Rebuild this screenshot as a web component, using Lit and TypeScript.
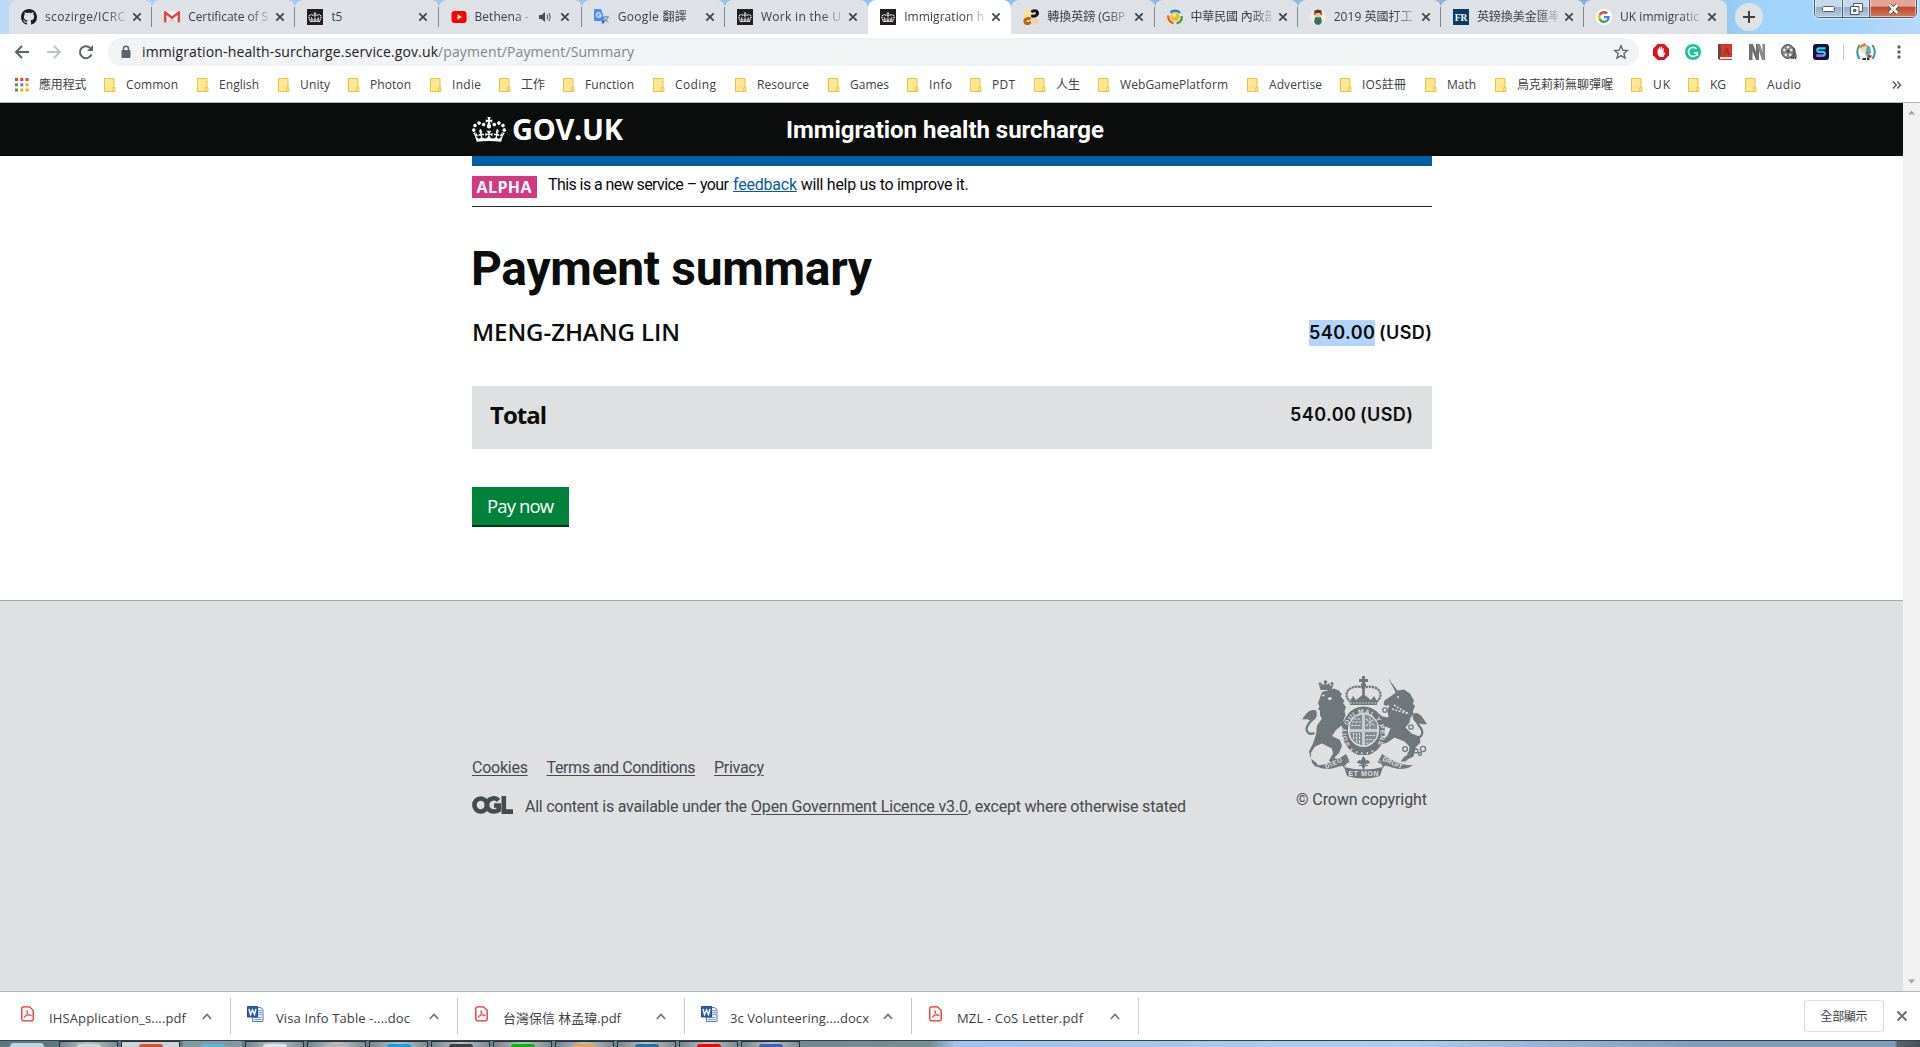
import { LitElement, html, css, svg, nothing } from "lit";
import { customElement, property } from "lit/decorators.js";

/** Inline label whose tracking is adjusted so the text spans a given width. */
@customElement("fit-text")
class FitText extends LitElement {
  @property({ type: Number }) w = 0;
  static styles = css`
    :host { display: inline-block; white-space: pre; flex: none; }
  `;
  render() {
    return html`<slot></slot>`;
  }
  updated() {
    this.style.letterSpacing = "0px";
    const range = document.createRange();
    range.selectNodeContents(this);
    const natural = range.getBoundingClientRect().width;
    const n = Array.from((this.textContent || "").trim()).length;
    if (n > 1 && natural > 0) this.style.letterSpacing = `${(this.w - natural) / (n - 1)}px`;
    this.style.width = `${this.w}px`;
  }
}

const CROWN =
  "M25 30.2c3.5 1.5 7.7-.2 9.1-3.7 1.5-3.6-.2-7.8-3.9-9.2-3.6-1.4-7.6.3-9.1 3.9-1.4 3.5.3 7.5 3.9 9zM9 39.5c3.6 1.5 7.8-.2 9.2-3.7 1.5-3.6-.2-7.8-3.9-9.1-3.6-1.5-7.6.2-9.1 3.8-1.4 3.5.3 7.5 3.8 9zM4.4 57.2c3.5 1.5 7.7-.2 9.1-3.8 1.5-3.6-.2-7.7-3.9-9.1-3.5-1.5-7.6.3-9.1 3.8-1.4 3.5.3 7.6 3.9 9.1zm38.3-21.4c3.5 1.5 7.7-.2 9.1-3.8 1.5-3.6-.2-7.7-3.9-9.1-3.6-1.5-7.6.3-9.1 3.8-1.3 3.6.4 7.7 3.9 9.1zm64.4-5.6c-3.6 1.5-7.8-.2-9.1-3.7-1.5-3.6.2-7.8 3.8-9.2 3.6-1.4 7.7.3 9.2 3.9 1.3 3.5-.4 7.5-3.9 9zm15.9 9.3c-3.6 1.5-7.7-.2-9.1-3.7-1.5-3.6.2-7.8 3.7-9.1 3.6-1.5 7.7.2 9.2 3.8 1.5 3.5-.3 7.5-3.8 9zm4.7 17.7c-3.6 1.5-7.8-.2-9.2-3.8-1.5-3.6.2-7.7 3.9-9.1 3.6-1.5 7.7.3 9.2 3.8 1.3 3.5-.4 7.6-3.9 9.1zM89.3 35.8c-3.6 1.5-7.8-.2-9.2-3.8-1.4-3.6.2-7.7 3.9-9.1 3.6-1.5 7.7.3 9.2 3.8 1.4 3.6-.3 7.7-3.9 9.1zM69.7 17.7l8.9 4.7V9.3l-8.9 2.8c-.2-.3-.5-.6-.9-.9L72.4 0H59.6l3.5 11.2c-.3.3-.6.5-.9.9l-8.8-2.8v13.1l8.8-4.7c.3.3.6.7.9.9l-5 15.4v.1c-.2.8-.4 1.6-.4 2.4 0 4.1 3.1 7.5 7 8.1h.2c.3 0 .7.1 1 .1.4 0 .7 0 1-.1h.2c4-.6 7.1-4.1 7.1-8.1 0-.8-.1-1.7-.4-2.4V34l-5.1-15.4c.4-.2.7-.6 1-.9zM66 92.8c16.9 0 32.8 1.1 47.1 3.2 4-16.9 8.9-26.7 14-33.5l-9.6-3.4c1 4.9 1.1 7.2 0 10.2-1.5-1.4-3-4.3-4.2-8.7L108.6 76c2.8-2 5-3.2 7.5-3.3-4.4 9.4-10 11.9-13.6 11.2-4.3-.8-6.3-4.6-5.6-7.9 1-4.7 5.7-5.9 8-.5 4.3-8.7-3-11.4-7.6-8.8 7.1-7.2 7.9-13.5 2.1-21.1-8 6.1-8.1 12.3-4.5 20.8-4.7-5.4-12.1-2.5-9.5 6.2 3.4-5.2 7.9-2 7.2 3.1-.6 4.3-6.4 7.8-13.5 7.2-10.3-.9-10.9-8-11.2-13.8 2.5-.5 7.1 1.8 11 7.3L80.2 60c-4.1 4.4-8 5.3-12.3 5.4 1.4-4.4 8-11.6 8-11.6H55.5s6.4 7.2 7.9 11.6c-4.2-.1-8-1-12.3-5.4l1.4 16.4c3.9-5.5 8.5-7.7 10.9-7.3-.3 5.8-.9 12.8-11.1 13.8-7.2.6-12.9-2.9-13.5-7.2-.7-5 3.8-8.3 7.1-3.1 2.7-8.7-4.6-11.6-9.4-6.2 3.7-8.5 3.6-14.7-4.6-20.8-5.8 7.6-5 13.9 2.2 21.1-4.7-2.6-11.9.1-7.7 8.8 2.3-5.5 7.1-4.2 8.1.5.7 3.3-1.3 7.1-5.7 7.9-3.5.7-9-1.8-13.5-11.2 2.5.1 4.7 1.3 7.5 3.3l-4.7-15.4c-1.2 4.4-2.7 7.2-4.3 8.7-1.1-3-.9-5.3 0-10.2l-9.5 3.4c5 6.9 9.9 16.7 14 33.5 14.8-2.1 30.8-3.2 47.7-3.2z";

const box = (content: unknown, size = 16, view = "0 0 16 16") =>
  html`<svg class="ico" width=${size} height=${size} viewBox=${view}>${content}</svg>`;

const govIcon = box(svg`<rect width="16" height="16" fill="#231f20"/>
  <g transform="translate(1.2 3.2) scale(.103)"><path fill="#fff" d=${CROWN} /></g>`);

const ICONS: Record<string, unknown> = {
  github: box(svg`<path fill="#1b1f23" fill-rule="evenodd" d="M8 0C3.58 0 0 3.58 0 8c0 3.54 2.29 6.53 5.47 7.59.4.07.55-.17.55-.38 0-.19-.01-.82-.01-1.49-2.01.37-2.53-.49-2.69-.94-.09-.23-.48-.94-.82-1.13-.28-.15-.68-.52-.01-.53.63-.01 1.08.58 1.23.82.72 1.21 1.87.87 2.33.66.07-.52.28-.87.51-1.07-1.78-.2-3.64-.89-3.64-3.95 0-.87.31-1.59.82-2.15-.08-.2-.36-1.02.08-2.12 0 0 .67-.21 2.2.82.64-.18 1.32-.27 2-.27s1.36.09 2 .27c1.53-1.04 2.2-.82 2.2-.82.44 1.1.16 1.92.08 2.12.51.56.82 1.27.82 2.15 0 3.07-1.87 3.75-3.65 3.95.29.25.54.73.54 1.48 0 1.07-.01 1.93-.01 2.2 0 .21.15.46.55.38A8.01 8.01 0 0 0 16 8c0-4.42-3.58-8-8-8z"/>`),
  gmail: box(svg`<path fill="#f5f5f5" d="M1 2.5h14v11H1z"/><path fill="#d6d6d6" d="M3 13.5 8 8.6l5 4.9z"/>
    <path fill="#d54b3d" d="M0 3.2C0 2.5.6 2 1.3 2L8 7.3 14.700 2c.7 0 1.300.5 1.300 1.200v9.500c0 .5-.4.8-.8.8H13.600V6L8 10.300 2.400 6v7.500H.8c-.4 0-.8-.3-.8-.8z"/>`),
  gov: govIcon,
  youtube: box(svg`<rect x=".5" y="2" width="15" height="12" rx="3" fill="#f00"/><path fill="#fff" d="m6.500 5.300 4.500 2.700-4.500 2.700z"/>`),
  translate: box(svg`<rect x="6" y="4.500" width="10" height="11" rx="1" fill="#dadce0"/>
    <path d="M9.500 8h5.500M12.200 7v1M14 8c-.5 2-2 3.700-4 4.800M10.500 9.500c.8 1.500 2 2.600 3.700 3.300" stroke="#5f7d98" stroke-width=".9" fill="none"/>
    <path d="M1 0h6.200l3.600 12H1a1 1 0 0 1-1-1V1a1 1 0 0 1 1-1z" fill="#4f8df5"/><path d="m7.500 12 3.300 0L8.800 15.500z" fill="#3a5fc4"/>
    <path d="M6.600 4.700A2.200 2.200 0 1 0 7 6.300H5" stroke="#fff" stroke-width="1.100" fill="none"/>`),
  xe: box(svg`<path d="M2 4.500C3 1.500 6.500 1 7.500 3.500c.6 2-.8 3.500-3 4" stroke="#fbdf8e" stroke-width="3.200" fill="none" stroke-linecap="round"/>
    <path d="M9.500 2.300c2-1.300 5-.6 5 2 0 2.300-2.500 3-5 2.800" stroke="#111" stroke-width="3" fill="none" stroke-linecap="round"/>
    <path d="M6.500 9.500C3 9 1.500 11 2 13c.6 2 3.500 2 5 .7" stroke="#b5690a" stroke-width="3" fill="none" stroke-linecap="round"/>
    <path d="M9.500 10.800c3-.8 5 .2 4.700 1.800-.5 1.900-3.200 2-4.700 1" stroke="#f9cdb0" stroke-width="3.400" fill="none" stroke-linecap="round"/>`),
  moi: box(svg`<circle cx="8" cy="7.500" r="4.300" fill="#f5b90f"/><circle cx="7.200" cy="6.300" r="2" fill="#ffe98a"/>
    <path d="M3.500 3.500C6 .8 11 .8 13 4" stroke="#1f7fd1" stroke-width="2.200" fill="none"/>
    <path d="M1.400 6.500C.8 10 3 13.500 6.500 14.300" stroke="#e8641b" stroke-width="2.400" fill="none"/>
    <path d="M9.500 14.400C13 13.500 15 10.500 14.700 7" stroke="#4ba82e" stroke-width="2.400" fill="none"/>`),
  person: box(svg`<circle cx="8" cy="8" r="8" fill="#f6ebdd"/><path fill="#5c3a22" d="M4.500 1.500 8 .5l3.500 1 .3 4.500H4.200z"/>
    <path fill="#efc09a" d="M5.500 4h5v3.500L8 9.300 5.500 7.500z"/><path fill="#2f7a5c" d="M5 8.300h6l1 5-2 2.200H6l-2-2.200z"/><path fill="#3c5a95" d="m8 9 1.500 6.500h-3z"/>`),
  fr: box(svg`<rect width="16" height="16" fill="#0a3d66"/><text x="8" y="11.600" text-anchor="middle" font-family="Liberation Serif" font-weight="700" font-size="9.500" fill="#fff">FR</text>`),
  google: box(svg`<circle cx="8" cy="8" r="8" fill="#fff"/><g transform="translate(2 2) scale(.25)">
    <path fill="#EA4335" d="M24 9.500c3.540 0 6.710 1.220 9.210 3.600l6.850-6.850C35.900 2.380 30.470 0 24 0 14.620 0 6.510 5.380 2.560 13.220l7.980 6.190C12.430 13.720 17.740 9.500 24 9.500z"/>
    <path fill="#4285F4" d="M46.980 24.550c0-1.570-.15-3.090-.38-4.550H24v9.020h12.940c-.58 2.960-2.260 5.480-4.780 7.180l7.730 6c4.510-4.180 7.090-10.360 7.090-17.650z"/>
    <path fill="#FBBC05" d="M10.530 28.590c-.48-1.450-.76-2.990-.76-4.590s.27-3.140.76-4.590l-7.980-6.190C.92 16.460 0 20.120 0 24c0 3.880.92 7.540 2.560 10.780l7.970-6.190z"/>
    <path fill="#34A853" d="M24 48c6.480 0 11.930-2.130 15.890-5.810l-7.730-6c-2.150 1.450-4.920 2.300-8.160 2.300-6.260 0-11.570-4.220-13.470-9.910l-7.980 6.190C6.510 42.620 14.620 48 24 48z"/></g>`),
};

const TABS = [
  { icon: "github", text: "scozirge/ICRC", w: 80 },
  { icon: "gmail", text: "Certificate of S", w: 80 },
  { icon: "gov", text: "t5", w: 11 },
  { icon: "youtube", text: "Bethena -", w: 54, audio: true },
  { icon: "translate", text: "Google 翻譯", w: 69 },
  { icon: "gov", text: "Work in the U", w: 80 },
  { icon: "gov", text: "Immigration h", w: 80, active: true },
  { icon: "xe", text: "轉換英鎊 (GBP", w: 78 },
  { icon: "moi", text: "中華民國 內政部", w: 86 },
  { icon: "person", text: "2019 英國打工", w: 79 },
  { icon: "fr", text: "英鎊換美金匯率", w: 84 },
  { icon: "google", text: "UK immigratic", w: 79 },
];

/** [label, label width, pitch to the next bookmark] */
const BOOKMARKS: [string, number, number][] = [
  ["Common", 52, 93], ["English", 40, 81], ["Unity", 30, 70], ["Photon", 41, 82], ["Indie", 29, 69],
  ["工作", 24, 64], ["Function", 49, 90], ["Coding", 41, 82], ["Resource", 52, 93], ["Games", 39, 79],
  ["Info", 23, 63], ["PDT", 23, 64], ["人生", 24, 64], ["WebGamePlatform", 108, 149], ["Advertise", 53, 93],
  ["IOS註冊", 44, 85], ["Math", 29, 70], ["烏克莉莉無聊彈喔", 96, 136], ["UK", 17, 57], ["KG", 16, 57], ["Audio", 34, 60],
];

const pdf = html`<svg class="ico" width="13" height="16" viewBox="0 0 13 16">
  <path d="M2.200.8h6.300l3.700 3.600v8.900a1.500 1.500 0 0 1-1.500 1.500H2.200A1.500 1.500 0 0 1 .8 13.300V2.200A1.500 1.500 0 0 1 2.200.8z" fill="#fff" stroke="#ec2b22" stroke-width="1.300"/>
  <path d="M3.300 11.200c1.700-1 3.300-3.800 3.300-6 0-1-.9-1-.8 0 .3 2.300 1.900 4 4 4.500.8.100.8-.8 0-.8-2 0-4.400.6-6.400 1.600-.8.400-.5 1.200-.1.700z" fill="none" stroke="#ec2b22" stroke-width=".8"/></svg>`;
const word = html`<svg class="ico doc" width="17" height="17" viewBox="0 0 17 17">
  <path d="M5.500 1.500h8l2.500 2v12H5.500z" fill="#eef3fb" stroke="#5b79b5"/><path d="M11 4.500h4M11 6.500h4M11 8.500h4M7 11.500h7.500M7 13.500h7.500" stroke="#7f9bd0"/>
  <path d="M.5.500h10v10.500H.5z" fill="#2f5db4" stroke="#234a94"/><path d="M2 3l1.500 5.500L5.500 4l2 4.500L9 3" fill="none" stroke="#fff" stroke-width="1.400"/></svg>`;

const DOWNLOADS: [unknown, string, number][] = [
  [pdf, "IHSApplication_s....pdf", 137],
  [word, "Visa Info Table -....doc", 134],
  [pdf, "台灣保信 林孟瑋.pdf", 118],
  [word, "3c Volunteering....docx", 139],
  [pdf, "MZL - CoS Letter.pdf", 126],
];

const TASKS: [string, string][] = [
  ["start", "#bcd4e6"], ["wide", "#c9d4d6"], ["wide hot", "#d8503f"], ["flat", "#5fb4e0"], ["", "#dfe6e8"],
  ["", "#b9b2b0"], ["", "#1ba1d8"], ["", "#3b4144"], ["", "#00b900"], ["", "#e0a45c"], ["", "#2c6d9e"], ["", "#e00b0b"], ["", "#3866b0"],
];

const crest = html`<svg class="crest" width="125" height="103" viewBox="0 0 125 103">
  <g fill="#6f777b">
    <!-- lion -->
    <path d="M17 9l1.500 5h11L31.500 8l-3 2-1.500-3-2.500 2L23 5.500 22 9l-3-1.500-.5 2.500z"/>
    <circle cx="23.500" cy="6" r="1.800"/><circle cx="18" cy="8" r="1.400"/><circle cx="30" cy="7.500" r="1.400"/>
    <path d="M20 16l12-3.500 5 2 3 4-1.500 1.500 4 5-1.500 2 3 4-1.500 4 1 4-2 5-1.500 5-6 5-4 6 8 4 2 6-3 7-5 5 8 2 2 4-12-.5-3-3 4-7-1-5-10-5-7 3-4 6 0 6 6 5 1 3H13l-3-4-1-4-2-7 4-8 3-9 1-9 5-7-2-3 0-5-2-1 1.500-3-1.500-3 1-3z"/>
    <path d="M29 21l-3.500 1 1.500 2.500 3-1.500zM20 19l2.500-.5v1.500l-2.500.5z" fill="#dee0e2"/>
    <path d="M12.500 57C6 60 2.500 54 6 49c3-6 9-6 7.500-11" fill="none" stroke="#6f777b" stroke-width="2.200"/>
    <path d="M14 40c2-5 0-7-5-5.500-4 1-6 5-9 9 3-.5 4 .5 5.500-.5 2.500 3 6 .5 8.500-3z"/>
    <path d="M34 40l7 4 3 6-2 2-6-5-6-3z"/>
    <!-- unicorn -->
    <path d="M86 2l10.500 14-2.500 1z"/>
    <path d="M92 18l4-3.500 6-1 6 4 4 7-1 3 2 3-2 4 .5 4-3 3-1 5-4 5 6 6 8 3 1 6-5 5-2 9-6 3-2 2h-5l4-5 4-2 1-8-5-5-10-4-7 5-6 2-5 .5-2-2.500 8-2 5-5 3-7-8-3-4 6-5-2-1-3.500 5 .5 3-5-7-4-2-5 3-2 8 6 6 1-1-7 2-6-3 1.500-3-1.500 1-4z"/>
    <circle cx="96" cy="21" r="1" fill="#dee0e2"/>
    <path d="M90 33l17 5M92 29l15 9" stroke="#dee0e2" stroke-width="1.500" stroke-dasharray="2 1.500"/>
    <path d="M111 62c8 2 12-5 7-11-4-5-5-8-1-12" fill="none" stroke="#6f777b" stroke-width="2.200"/>
    <path d="M111 43c-1-6 2-7 6-5 3 2 5 6 8 10-3 .5-5 .5-6-.5-3 1-6-1-8-4.500z"/>
    <!-- chain -->
    <g fill="none" stroke="#6f777b" stroke-width="1.300">
      <circle cx="83" cy="34" r="2.200"/><circle cx="87" cy="46" r="2.200"/><circle cx="109" cy="51" r="2.200"/>
      <circle cx="103" cy="73" r="2.400"/><circle cx="108" cy="78" r="2"/><circle cx="114" cy="75" r="2"/><circle cx="121" cy="73" r="2.600"/><circle cx="118" cy="78" r="1.500"/>
    </g>
    <!-- crown -->
    <path d="M60 0h3v3h3v3h-3v2h-3V6h-3V3h3z"/><circle cx="61.500" cy="9" r="2.600"/>
    <path d="M61.500 12c-6-3-17-1-17 7 0 3 2 5 4 7h26c2-2 4-4 4-7 0-8-11-10-17-7z" fill="none" stroke="#6f777b" stroke-width="2.200" stroke-dasharray="2.500 .6"/>
    <path d="M61.500 10v16" stroke="#6f777b" stroke-width="2.600"/>
    <path d="M48 25l3-5 3 4 7.500-6 7.500 6 3-4 3 5v4H48z"/><path d="M48 27h27" stroke="#dee0e2" stroke-width=".8" stroke-dasharray="2 1"/>
  </g>
  <!-- shield and garter -->
  <ellipse cx="61.500" cy="55" rx="21.500" ry="24.500" fill="#6f777b"/>
  <ellipse cx="61.500" cy="54" rx="15" ry="16.500" fill="#c8cccf" stroke="#dee0e2" stroke-width="1.200"/>
  <g fill="#6f777b"><path d="M48 53V47l5-6 7-2.500V53zM63 53V38.500l7 2.500 5 6V53zM48 56h12v13.500l-7-3-4-5zM63 56h12l-1 6-5 5-6 2.500z" opacity=".75"/></g>
  <g stroke="#dee0e2" fill="none" stroke-width="1.100">
    <path d="M50 46h9M49 49.500h10M52 43h7M64 43l9 7M64 50l8-7M68 41v12M51.500 57v7M54.500 57v10M57.500 57v12M64 59.500h9M64 63.500h8M64 67h5" stroke-dasharray="2.500 1"/>
  </g>
  <path id="garter" d="M48 69A17 19.500 0 1 1 75 69" fill="none"/>
  <text font-family="Liberation Sans" font-weight="700" font-size="6.500" fill="#dee0e2"><textPath href="#garter" textLength="86">SOIT QUI MAL Y PENSE</textPath></text>
  <path d="M49 73q12.500 9 25 0" fill="none" stroke="#dee0e2" stroke-width="2" stroke-dasharray="1.500 4"/>
  <!-- fleur -->
  <path d="M56 79h11l2 11H54z" fill="#dee0e2"/>
  <path d="M61.500 80.500l2.500 4.500-2.500 9-2.500-9zM55.500 87c1-4 4-3 5 1.500M67.500 87c-1-4-4-3-5 1.500M57 89.500h9" fill="#6f777b" stroke="#6f777b" stroke-width="1"/>
  <!-- motto ribbon -->
  <path d="M13 89c10 1 21-4 31-11l3 6c-2 2-4 2-3 6-7-1-8 2-17 3-6 0-10-1-14-4zM111 89c-10 1-21-4-31-11l-3 6c2 2 4 2 3 6 7-1 8 2 17 3 6 0 10-1 14-4zM42 91q19.500 5 39 0l-3 9q-16.500 5-33 0z" fill="#6f777b"/>
  <path d="M42 91c-3-4 3-3 5-6M81 91c3-4-3-3-5-6" stroke="#6f777b" stroke-width="1.500" fill="none"/>
  <g font-family="Liberation Sans" font-weight="700" font-size="6.500" fill="#dee0e2">
    <text transform="translate(24 93) rotate(-24)" textLength="18">DIEU</text>
    <text x="46.500" y="100" textLength="30" font-size="7">ET MON</text>
    <text transform="translate(80 84.500) rotate(24)" textLength="21">DROIT</text>
  </g>
</svg>`;

@customElement("app-root")
class AppRoot extends LitElement {
  static styles = css`
    :host { display: block; }
    * { box-sizing: border-box; }
    .ico { display: block; flex: none; }
    .screen {
      width: 1920px; height: 1047px; overflow: hidden; display: flex; flex-direction: column; background: #fff;
      font-family: "Open Sans", "Noto Sans CJK TC", sans-serif; font-size: 12px; color: #3c4043;
    }

    .tabstrip {
      height: 34px; flex: none; display: flex; padding-left: 9px; position: relative;
      background: linear-gradient(90deg, #b9dbf8 0, #a2cdf2 200px, #8fc2ec 900px, #7fb2dd 1650px, #a0d3fb 1760px, #a3d5fc 1850px, #b6dafa 1920px);
    }
    .tab {
      width: 143.200px; height: 34px; flex: none; display: flex; align-items: center; padding-left: 12px;
      background: #dee1e6; border-radius: 8px 8px 0 0; position: relative;
    }
    .tab.active { background: #fff; }
    .tab.sep::after { content: ""; position: absolute; right: 0; top: 7px; width: 1px; height: 20px; background: #80868b; }
    .tab-text { width: 81px; margin-left: 8px; overflow: hidden; height: 20px; line-height: 20px; mask-image: linear-gradient(90deg, #000 60px, #0003 81px); }
    .tab-text.short { width: 54px; mask-image: linear-gradient(90deg, #000 40px, #0005 54px); }
    .speaker { margin-left: 9px; margin-right: 4px; }
    .close { margin-left: 6px; }
    .close.tight { margin-left: 4px; }
    .newtab { width: 28px; height: 28px; border-radius: 50%; background: #dee1e6; margin: 3px 0 0 8px; display: grid; place-items: center; }
    .winctl { position: absolute; right: 3px; top: -2px; height: 20px; display: flex; border: 1px solid #4a5a6c; border-radius: 0 0 5px 5px; overflow: hidden; box-shadow: 0 0 0 1px #ffffff90; }
    .winctl div { display: grid; place-items: center; width: 27px; padding-top: 2px; background: linear-gradient(#c7d9ea 0 45%, #95aec6 45%, #b5cbe0); box-shadow: inset 0 0 0 1px #ffffff80; }
    .winctl .mx { width: 27px; border-left: 1px solid #4a5a6c; }
    .winctl .cl { width: 47px; border-left: 1px solid #4a5a6c; background: linear-gradient(#e2a596 0 40%, #bf4632 45%, #d47b5c); }

    .toolbar { height: 36px; flex: none; display: flex; align-items: center; background: #fff; padding-left: 14px; }
    .toolbar .nav { margin-right: 16px; }
    .omnibox { width: 1531px; height: 28px; border-radius: 14px; background: #f1f3f4; display: flex; align-items: center; padding: 0 10px 1px 12px; margin: 0 14px 0 -2px; font-size: 14px; color: #202124; }
    .omnibox .lock { margin-right: 10px; }
    .path { color: #80868b; }
    .grow { flex: 1; }
    .ext { width: 32px; flex: none; }
    .vsep { width: 1px; height: 16px; background: #c4c7ca; margin: 0 12px 0 -2px; }
    .dots { margin-left: 21px; }

    .bookmarks { height: 32px; flex: none; display: flex; align-items: center; padding-left: 15px; line-height: 20px; padding-bottom: 2px; }
    .bm { display: flex; align-items: center; flex: none; }
    .bm .ico { margin-right: 10px; }
    .apps { width: 89px; }
    .more { margin-left: 87px; }

    .view { height: 889px; flex: none; display: flex; border-top: 1px solid #b6b4b6; }
    .page { width: 1903px; height: 888px; font-family: Roboto, "Open Sans", sans-serif; color: #0b0c0c; display: flex; flex-direction: column; }
    .scroll { width: 17px; background: #f1f1f1; display: flex; flex-direction: column; justify-content: space-between; align-items: center; padding: 7px 0; }
    .wrap { width: 960px; margin: 0 auto; position: relative; left: .5px; }
    .gov { height: 53px; background: #0b0c0c; color: #fff; flex: none; }
    .gov .wrap { display: flex; font-weight: 700; align-items: center; height: 53px; }
    .logo { font-family: "Open Sans", sans-serif; font-size: 29px; line-height: 40px; margin: -1px 163px 0 6px; }
    .crown { margin-top: -1px; display: block; }
    .svc { font-size: 24px; line-height: 30px; margin-top: 1px; }
    .bar { height: 10px; background: #005ea5; }
    .phase { height: 41px; border-bottom: 1px solid #26292b; display: flex; align-items: flex-start; padding-top: 10px; font-size: 16px; line-height: 20px; }
    .tag { width: 65px; height: 22px; background: #d53880; color: #fff; font-weight: 700; font-size: 16px; line-height: 22px; padding-left: 4.500px; margin-right: 11px; font-family: "Open Sans", sans-serif; }
    .phase .t { margin-top: -1px; white-space: pre; }
    .lnk { color: #005ea5; text-decoration: underline; }
    h1 { margin: 34px 0 0 -1px; font-size: 48px; line-height: 56px; font-weight: 700; height: 56px; }
    .row { display: flex; justify-content: space-between; align-items: flex-start; font-family: "Open Sans", sans-serif; }
    .who { margin-top: 20px; height: 69px; }
    .name { font-size: 24px; line-height: 30px; font-weight: 600; }
    .amt { font-family: Inter, sans-serif; font-size: 18px; line-height: 26px; font-weight: 600; display: flex; gap: 4px; }
    .amt .sel { background: #b3d4fc; }
    .who .amt { margin-top: 3px; }
    .total { height: 63px; background: #dee0e2; padding: 14px 19px; }
    .total .name { font-weight: 700; margin-left: -1px; }
    .total .amt { margin-top: 2px; }
    .pay { width: 97px; height: 38px; background: #00823b; color: #fff; box-shadow: 0 2px 0 #003618; margin-top: 38px; font-family: "Open Sans", sans-serif; font-size: 18.500px; line-height: 37px; padding-left: 15px; }
    .footer { margin-top: 75px; border-top: 1px solid #a1acb2; background: #dee0e2; flex: 1; color: #454a4d; font-size: 16px; line-height: 20px; }
    .footer .wrap { display: flex; justify-content: space-between; padding-top: 75px; }
    .links { display: flex; gap: 18.500px; margin-top: 82px; }
    .ul { text-decoration: underline; text-underline-offset: 2px; }
    .ogl { display: flex; margin-top: 19px; align-items: flex-start; }
    .ogl .mark { margin: -1px 12px 0 0; display: block; }
    .ogl .lic { white-space: pre; display: flex; }
    .copy { width: 136px; display: flex; flex-direction: column; }
    .crest { display: block; margin-left: 6px; overflow: visible; }
    .cr { margin-top: 11px; }

    .shelf { height: 49px; flex: none; border-top: 1px solid #b4b5b7; background: #fff; display: flex; align-items: center; font-size: 13px; }
    .dl { width: 227px; height: 36px; border-right: 1px solid #c8c8c8; display: flex; align-items: center; padding-left: 17px; flex: none; }
    .dl:first-child { width: 231px; padding-left: 21px; }
    .dl .ib { width: 28px; flex: none; margin-top: -5px; }
    .doc { margin: 2px 0 0 -1px; }
    .dl .tx { width: 153px; margin-top: 3px; flex: none; }
    .all { width: 80px; height: 32px; border: 1px solid #dadce0; border-radius: 4px; display: grid; place-items: center; font-size: 12px; margin-right: 12px; }
    .shelf .x { margin-right: 12px; }

    .taskbar { height: 7px; flex: none; display: flex; gap: 3px; border-top: 1px solid #34424c; padding-left: 10px;
      background: linear-gradient(90deg, #5e7681 0, #6f878d 700px, #768f93 930px, #9cc3ee 955px, #a9cdf5 1400px, #7e9cbf 1700px, #7f9cbe 1895px, #59656d 1897px, #485157 1920px); }
    .task { width: 59px; height: 6px; border: 1px solid #26313a; border-bottom: 0; background: linear-gradient(90deg, #75858c, #b9c3c6 50%, #7d8c92); display: flex; justify-content: center; align-items: flex-end; }
    .task i { display: block; width: 24px; height: 3px; border-radius: 12px 12px 0 0; }
    .task.start { width: 46px; border: 0; background: none; justify-content: flex-start; }
    .task.start i { width: 34px; height: 4px; }
    .task.flat { border: 0; background: #7f9aa4; }
    .task.hot { background: #cdd4d6; }
  `;

  private fit(t: string, w: number, c = "") {
    return html`<fit-text class=${c} .w=${w}>${t}</fit-text>`;
  }

  private tab(t: any, i: number) {
    const next = TABS[i + 1];
    const sep = !t.active && next && !next.active;
    return html`<div class="tab ${t.active ? "active" : ""} ${sep ? "sep" : ""}">
      ${ICONS[t.icon]}
      <div class="tab-text ${t.audio ? "short" : ""}">${this.fit(t.text, t.w)}</div>
      ${t.audio
        ? html`<svg class="ico speaker" width="14" height="12" viewBox="0 0 14 12"><path fill="#4a4e52" d="M1 4h2.500L7 1v10L3.500 8H1z"/><path d="M9 3.500q1.500 2.500 0 5M11 2q2.500 4 0 8" fill="none" stroke="#4a4e52"/></svg>`
        : nothing}
      <svg class="ico close ${t.audio ? "tight" : ""}" width="10" height="10" viewBox="0 0 10 10"><path d="M1.300 1.300l7.400 7.400M8.700 1.300L1.300 8.700" stroke="#3f4347" stroke-width="1.700"/></svg>
    </div>`;
  }

  render() {
    return html`<div class="screen">
      <div class="tabstrip">
        ${TABS.map((t, i) => this.tab(t, i))}
        <div class="newtab"><svg width="12" height="12" viewBox="0 0 12 12"><path d="M6 0v12M0 6h12" stroke="#3c4043" stroke-width="2"/></svg></div>
        <div class="winctl">
          <div><svg width="13" height="6" viewBox="0 0 13 6"><rect x=".5" y=".5" width="12" height="5" rx="1" fill="#fff" stroke="#4c5866"/></svg></div>
          <div class="mx"><svg width="13" height="12" viewBox="0 0 13 12"><path d="M3.500.500h9v8h-9z" fill="#fff" stroke="#4c5866"/><path d="M.5 3.500h8.500v8H.5z" fill="#fff" stroke="#4c5866"/><path d="M3.500 6.500h2.500v2H3.500z" fill="#8ea5bd" stroke="#4c5866"/></svg></div>
          <div class="cl"><svg width="13" height="12" viewBox="0 0 13 12"><path d="M2.500 2l8 8M10.500 2l-8 8" stroke="#57444c" stroke-width="4.500"/><path d="M2.500 2l8 8M10.500 2l-8 8" stroke="#fff" stroke-width="2.800"/></svg></div>
        </div>
      </div>

      <div class="toolbar">
        <svg class="ico nav" width="16" height="16" viewBox="0 0 16 16"><path d="M15 8H2.500M8 2L2 8l6 6" fill="none" stroke="#5f6368" stroke-width="2"/></svg>
        <svg class="ico nav" width="16" height="16" viewBox="0 0 16 16"><path d="M1 8h12.500M8 2l6 6-6 6" fill="none" stroke="#bdc1c6" stroke-width="2"/></svg>
        <svg class="ico nav" width="16" height="16" viewBox="0 0 16 16"><path d="M13.500 10.500A6 6 0 1 1 12.300 4" fill="none" stroke="#5f6368" stroke-width="2"/><path fill="#5f6368" d="M15 1v6H9z"/></svg>
        <div class="omnibox">
          <svg class="ico lock" width="12" height="14" viewBox="0 0 12 14"><path d="M3.500 6V3.700a2.500 2.500 0 0 1 5 0V6" fill="none" stroke="#5f6368" stroke-width="1.500"/><rect x="1.500" y="5" width="9" height="8" rx="1" fill="#5f6368"/></svg>
          ${this.fit("immigration-health-surcharge.service.gov.uk", 296)}${this.fit("/payment/Payment/Summary", 196, "path")}
          <span class="grow"></span>
          <svg class="ico" width="16" height="16" viewBox="0 0 16 16"><path d="M8 1.800l1.800 4.300 4.700.4-3.600 3 1.100 4.600L8 11.600l-4 2.500 1.100-4.600-3.600-3 4.700-.4z" fill="none" stroke="#5f6368" stroke-width="1.300"/></svg>
        </div>
        <div class="ext">${box(svg`<path d="M4.700 0h6.600L16 4.700v6.600L11.300 16H4.700L0 11.300V4.700z" fill="#e1101a"/><path d="M4.500 8.500l.2-3.700q.6-.6 1 0l.3 2.500.2-4.300q.6-.6 1.100 0l.3 4 .5-4.300q.6-.6 1.100 0v4.500l.7-3q.7-.5 1 .1l-.4 5.200 1-1q1-.3.9.5L10.500 13H6.500Q4.500 11.500 4.500 8.500z" fill="#fff"/>`)}</div>
        <div class="ext">${box(svg`<circle cx="8" cy="8" r="8" fill="#15c39a"/><path d="M11.500 5A4.500 4.500 0 1 0 12.400 8.800H8.800M12.400 8.800v3" fill="none" stroke="#fff" stroke-width="1.600"/>`)}</div>
        <div class="ext">${box(svg`<path fill="#5c4a4a" d="M1 0h3v15H1z"/><path fill="#d23a2e" d="M4 0h11v13H4z"/><path fill="#f6e9dd" d="M3 13h12v2H3z"/><text x="9.500" y="10.500" text-anchor="middle" font-size="10" font-family="Liberation Serif" fill="#8f2219">A</text><path d="M2 15.500h13" stroke="#d23a2e"/>`)}</div>
        <div class="ext">${box(svg`<path fill="#707070" d="M0 0h4l3 8V0h3v16H7L3.500 7v9H0z"/><path fill="#8a8a8a" d="M8 0h3l2.500 8V0H16v16h-3L10 7z"/>`)}</div>
        <div class="ext">${box(svg`<path d="M8 1.500l6 2.500 2 9.500-5 1.500z" fill="#6b6b6b"/><ellipse cx="6.800" cy="7.500" rx="6.300" ry="7" fill="#8a8a8a" stroke="#4a4a4a"/><g fill="#f4f4f4" stroke="#555" stroke-width=".5"><circle cx="7" cy="3.300" r="1.700"/><circle cx="3.300" cy="6" r="1.700"/><circle cx="10.300" cy="6" r="1.700"/><circle cx="4.700" cy="10.800" r="1.700"/><circle cx="9.300" cy="10.800" r="1.700"/></g><circle cx="7" cy="7.200" r="1" fill="#222"/><path d="M10 13.500l6 1.200" stroke="#333" stroke-width="2" stroke-dasharray="1 1"/>`)}</div>
        <div class="ext">${box(svg`<rect width="16" height="16" rx="3" fill="#17123b"/><path d="M12.500 4.300H6Q4.300 4.300 4.300 6t1.700 1.800h4Q11.800 8 11.800 9.700T10 11.600H3.500" fill="none" stroke="#33d0e8" stroke-width="2.200"/><path d="M10 11.600H3.500" stroke="#b35be8" stroke-width="2.200"/>`)}</div>
        <span class="vsep"></span>
        ${box(svg`<circle cx="10" cy="10" r="10" fill="#f4f8f7"/><path d="M3.500 3q-4.500 7 0 14M16.500 3q4.500 7 0 14" stroke="#4c9199" stroke-width="2" fill="none"/><path fill="#f3dcb8" d="M5.500 4l4-1 2 4-2 4-4-1-1-3z"/><path fill="#d88a4c" d="M5 2.500l4-1.500 2 3-5 1-1 2-1.500-2z"/><path fill="#5aa7b0" d="M11 3l3 2 1 6-3 3-5-1 3-3z"/><path fill="#fff" d="M6 11l3 0 2 4-4 1z"/><path fill="#a3352f" d="M12 13l4 .5-1 2-4 .5z"/><path fill="#3a2c28" d="M7 16h3v2H6zM11 16h2.500v2H11z"/>`, 20, "0 0 20 20")}
        <svg class="ico dots" width="4" height="16" viewBox="0 0 4 16"><g fill="#5f6368"><circle cx="2" cy="3" r="1.700"/><circle cx="2" cy="8" r="1.700"/><circle cx="2" cy="13" r="1.700"/></g></svg>
      </div>

      <div class="bookmarks">
        <div class="bm apps">
          <svg class="ico" width="14" height="14" viewBox="0 0 14 14">
            <g fill="#ea4335"><path d="M0 0h3v3H0zM5.300 0h3v3h-3z"/><path d="M10.600 0h3v3h-3z"/></g>
            <path fill="#34a853" d="M0 5.300h3v3H0zM0 10.600h3v3H0z"/><path fill="#4285f4" d="M5.300 5.300h3v3h-3z"/><path fill="#f9ab00" d="M10.600 5.300h3v3h-3zM5.300 10.600h3v3h-3zM10.600 10.600h3v3h-3z"/>
          </svg>${this.fit("應用程式", 47.5)}
        </div>
        ${BOOKMARKS.map(([t, w, p]) => html`<div class="bm" style="width:${p}px">
          <svg class="ico" width="12" height="14" viewBox="0 0 12 14"><path d="M.5.500h9.500V9l1 1v3.500H.5z" fill="#ffe794" stroke="#e9c343"/><path d="M8.700 13V9.500h2" fill="none" stroke="#e9c343"/></svg>${this.fit(t, w)}</div>`)}
        <svg class="ico more" width="10" height="10" viewBox="0 0 10 10"><path d="M1 1.500L4.200 5 1 8.500M5.300 1.500L8.500 5 5.300 8.500" fill="none" stroke="#5f6368" stroke-width="1.600"/></svg>
      </div>

      <div class="view">
        <div class="page">
          <div class="gov"><div class="wrap">
            <svg class="crown" width="34" height="25" viewBox="0 0 132 97"><path fill="#fff" d=${CROWN} /></svg>
            ${this.fit("GOV.UK", 111, "logo")}${this.fit("Immigration health surcharge", 318, "svc")}
          </div></div>
          <div class="wrap">
            <div class="bar"></div>
            <div class="phase">
              <div class="tag">${this.fit("ALPHA", 55)}</div>
              <div class="t">${this.fit("This is a new service – your ", 185)}${this.fit("feedback", 64, "lnk")}${this.fit(" will help us to improve it.", 172)}</div>
            </div>
            <h1>${this.fit("Payment summary", 401)}</h1>
            <div class="row who">
              ${this.fit("MENG-ZHANG LIN", 208, "name")}
              <div class="amt">${this.fit("540.00", 66, "sel")}${this.fit("(USD)", 53)}</div>
            </div>
            <div class="row total">
              ${this.fit("Total", 57, "name")}
              <div class="amt">${this.fit("540.00", 66)}${this.fit("(USD)", 53)}</div>
            </div>
            <div class="pay">${this.fit("Pay now", 67)}</div>
          </div>
          <div class="footer"><div class="wrap">
            <div>
              <div class="links">${this.fit("Cookies", 56, "ul")}${this.fit("Terms and Conditions", 149, "ul")}${this.fit("Privacy", 50, "ul")}</div>
              <div class="ogl">
                <svg class="mark" width="41" height="18" viewBox="0 0 41 18"><g fill="none" stroke="#454a4d" stroke-width="4.600"><ellipse cx="8.700" cy="9" rx="6.300" ry="6.500"/><path d="M26.500 4.500A6.600 6.600 0 1 0 22 15.500q3 0 4.800-1.500V9.500H22"/><path d="M31.800 0v15.600H41"/></g></svg>
                <div class="lic">${this.fit("All content is available under the ", 226)}${this.fit("Open Government Licence v3.0", 217, "ul")}${this.fit(", except where otherwise stated", 218)}</div>
              </div>
            </div>
            <div class="copy">${crest}${this.fit("© Crown copyright", 131, "cr")}</div>
          </div></div>
        </div>
        <div class="scroll">
          <svg width="7" height="5" viewBox="0 0 7 5"><path d="M0 4.500L3.500.500 7 4.500z" fill="#a3a3a3"/></svg>
          <svg width="7" height="5" viewBox="0 0 7 5"><path d="M0 .5L3.500 4.500 7 .5z" fill="#a3a3a3"/></svg>
        </div>
      </div>

      <div class="shelf">
        ${DOWNLOADS.map(([ic, t, w]) => html`<div class="dl"><div class="ib">${ic}</div><div class="tx">${this.fit(t, w)}</div>
          <svg class="ico" width="10" height="7" viewBox="0 0 10 7"><path d="M.8 6L5 1.500 9.200 6" fill="none" stroke="#757575" stroke-width="1.700"/></svg></div>`)}
        <span class="grow"></span>
        <div class="all">${this.fit("全部顯示", 47)}</div>
        <svg class="ico x" width="12" height="12" viewBox="0 0 12 12"><path d="M1.500 1.500l9 9M10.500 1.500l-9 9" stroke="#6a6e72" stroke-width="2"/></svg>
      </div>
      <div class="taskbar">${TASKS.map(([c, col]) => html`<div class="task ${c}"><i style="background:${col}"></i></div>`)}</div>
    </div>`;
  }
}
